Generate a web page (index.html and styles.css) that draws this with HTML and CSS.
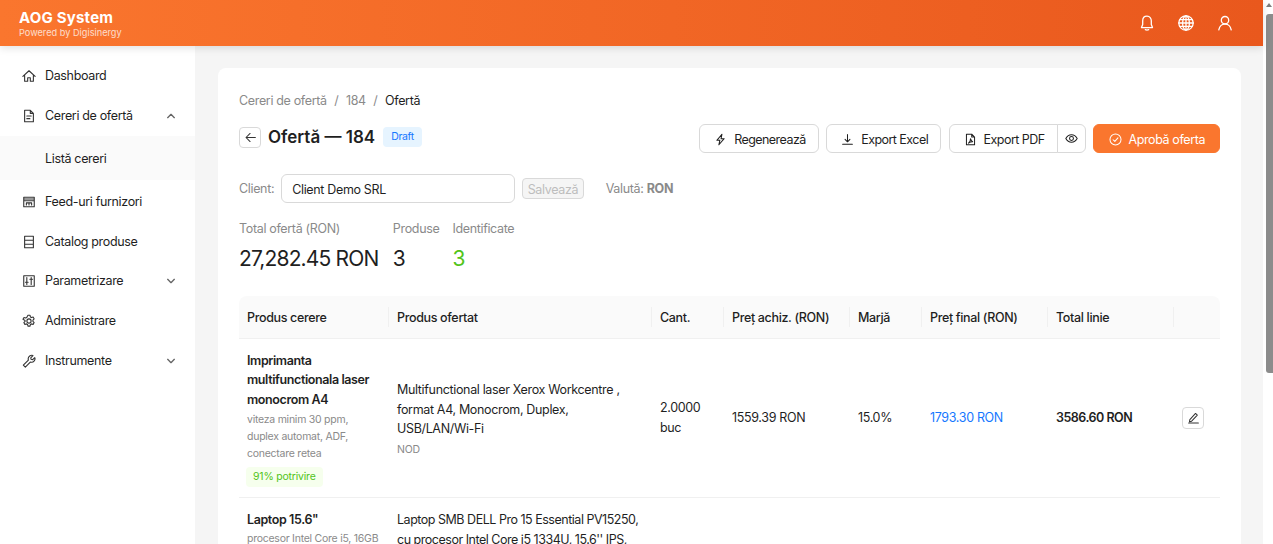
FILE: index.html
```html
<!DOCTYPE html>
<html lang="ro">
<head>
    <meta charset="UTF-8">
    <title>AOG System</title>
    <link rel="stylesheet" href="styles.css">
</head>
<body>
    <div class="window">
        <div class="app">
            <header class="topbar">
                <div class="brand">
                    <div class="brand-name">AOG System</div>
                    <div class="brand-sub">Powered by Digisinergy</div>
                </div>
                <div class="top-icons">
                    <svg viewBox="0 0 16 16"><path d="M8 1.200c-2.800 0-4.300 2.100-4.300 4.600v3.600L2.500 12.600h11l-1.200-3.200V5.800C12.300 3.300 10.800 1.200 8 1.200z"/><path d="M6.300 14.700c1 .5 2.400.5 3.400 0"/></svg>
                    <svg viewBox="0 0 16 16"><circle cx="8" cy="8" r="7.200"/><ellipse cx="8" cy="8" rx="3.400" ry="7.200"/><path d="M8 .8v14.400M.8 8h14.400M1.900 4.700h12.200M1.900 11.300h12.200"/></svg>
                    <svg viewBox="0 0 16 16"><circle cx="8" cy="5.200" r="3.700"/><path d="M1.800 14.800c.5-3.300 3-5.800 6.200-5.800s5.700 2.500 6.200 5.800"/></svg>
                </div>
            </header>
            <div class="body-row">
                <nav class="sidebar">
                    <div class="nav-item">
                        <svg class="nav-icon" viewBox="0 0 16 16"><path d="M1 8.500 8 2l7 6.500M3 7v7h3.500v-4h3v4H13V7"/></svg>
                        <span>Dashboard</span>
                    </div>
                    <div class="nav-item">
                        <svg class="nav-icon" viewBox="0 0 16 16"><path d="M3 1.500h6.500L13 5v9.500H3zM9.500 1.500V5H13M5.500 8h5M5.500 11h3.500"/></svg>
                        <span>Cereri de ofertă</span>
                        <svg class="nav-caret" viewBox="0 0 12 12"><path d="M2 8l4-4 4 4"/></svg>
                    </div>
                    <div class="nav-sub">Listă cereri</div>
                    <div class="nav-item">
                        <svg class="nav-icon" viewBox="0 0 16 16"><path d="M2 2.500h12v11H2zM2 4.500h12M2 6.500h12M5 9h6M5 11.500v-2.500M8 11.500v-2.500M11 11.500v-2.500"/></svg>
                        <span>Feed-uri furnizori</span>
                    </div>
                    <div class="nav-item">
                        <svg class="nav-icon" viewBox="0 0 16 16"><path d="M3 1.500h10v13H3zM3 6h10M3 10.500h10"/></svg>
                        <span>Catalog produse</span>
                    </div>
                    <div class="nav-item">
                        <svg class="nav-icon" viewBox="0 0 16 16"><path d="M2 2h12v12H2zM5.500 4v8M10.500 4v8M4 9.500h3M9 6h3"/></svg>
                        <span>Parametrizare</span>
                        <svg class="nav-caret" viewBox="0 0 12 12"><path d="M2 4l4 4 4-4"/></svg>
                    </div>
                    <div class="nav-item">
                        <svg class="nav-icon" viewBox="0 0 16 16"><circle cx="8" cy="8" r="2.400"/><path d="M6.800 1.500h2.400l.4 1.900 1.300.7 1.800-.6 1.200 2.100-1.400 1.300v1.600l1.400 1.300-1.200 2.100-1.800-.6-1.300.7-.4 1.900H6.800l-.4-1.900-1.300-.7-1.800.6-1.200-2.100 1.400-1.300V7.400L1.100 6.100l1.200-2.100 1.800.6 1.300-.7z"/></svg>
                        <span>Administrare</span>
                    </div>
                    <div class="nav-item">
                        <svg class="nav-icon" viewBox="0 0 16 16"><path d="M1.500 12.700 7.300 6.900c-.6-1.900 0-3.500 1.500-4.600 1.200-.8 2.600-1 3.700-.5L10 4.300l.4 1.800 1.800.4 2.400-2.400c.5 1.200.3 2.600-.6 3.700-1.100 1.400-2.700 2-4.500 1.400l-5.700 5.800z"/></svg>
                        <span>Instrumente</span>
                        <svg class="nav-caret" viewBox="0 0 12 12"><path d="M2 4l4 4 4-4"/></svg>
                    </div>
                </nav>
                <main class="content">
                    <section class="card">
                        <div class="crumbs">
                            <span>Cereri de ofertă</span><span class="sep">/</span><span>184</span><span class="sep">/</span><span class="crumb-now">Ofertă</span>
                        </div>
                        <div class="head-row">
                            <div class="title-wrap">
                                <button class="back-btn"><svg viewBox="0 0 16 16"><path d="M14 8H2.500M7.500 3 2.500 8l5 5"/></svg></button>
                                <h1>Ofertă — 184</h1>
                                <span class="tag-draft">Draft</span>
                            </div>
                            <div class="actions">
                                <button class="btn"><svg viewBox="0 0 16 16"><path d="M9.800 1.500 3.500 9h3.700l-1.200 5.500L12.500 7H8.700l1.100-5.500z"/></svg>Regenerează</button>
                                <button class="btn"><svg viewBox="0 0 16 16"><path d="M8 2v8.500M5 7.800 8 10.800l3-3M2 13.800h12"/></svg>Export Excel</button>
                                <div class="btn-group">
                                    <button class="btn"><svg viewBox="0 0 16 16"><path d="M3 1.500h6.500L13 5v9.500H3zM9.500 1.500V5H13M5.500 12.500c1.500-1 2.600-3.200 2.500-5.500.5 2 1.300 3.200 2.700 3.700-1.800 0-3.500.5-5.200 1.800z"/></svg>Export PDF</button>
                                    <button class="btn btn-eye"><svg viewBox="0 0 16 16"><path d="M1 8c1.700-3 4-4.500 7-4.500s5.300 1.500 7 4.500c-1.700 3-4 4.500-7 4.500S2.700 11 1 8z"/><circle cx="8" cy="8" r="2.400"/></svg></button>
                                </div>
                                <button class="btn btn-primary"><svg viewBox="0 0 16 16"><circle cx="8" cy="8" r="6.800"/><path d="M5 8.300l2.200 2.100L11 6"/></svg>Aprobă oferta</button>
                            </div>
                        </div>
                        <div class="client-row">
                            <label>Client:</label>
                            <input class="client-input" type="text" value="Client Demo SRL">
                            <button class="btn-save" disabled>Salvează</button>
                            <span class="currency">Valută: <b>RON</b></span>
                        </div>
                        <div class="stats">
                            <div class="stat stat-total">
                                <div class="stat-label">Total ofertă (RON)</div>
                                <div class="stat-value">27,282.45 RON</div>
                            </div>
                            <div class="stat">
                                <div class="stat-label">Produse</div>
                                <div class="stat-value">3</div>
                            </div>
                            <div class="stat">
                                <div class="stat-label">Identificate</div>
                                <div class="stat-value stat-green">3</div>
                            </div>
                        </div>
                        <table class="offer-table">
                            <colgroup>
                                <col class="c-req"><col class="c-off"><col class="c-qty"><col class="c-buy"><col class="c-mar"><col class="c-fin"><col class="c-tot"><col class="c-act">
                            </colgroup>
                            <thead>
                                <tr>
                                    <th>Produs cerere</th>
                                    <th>Produs ofertat</th>
                                    <th>Cant.</th>
                                    <th>Preț achiz. (RON)</th>
                                    <th>Marjă</th>
                                    <th>Preț final (RON)</th>
                                    <th>Total linie</th>
                                    <th></th>
                                </tr>
                            </thead>
                            <tbody>
                                <tr>
                                    <td class="text-cell">
                                        <div class="prod-name">Imprimanta multifunctionala laser monocrom A4</div>
                                        <div class="prod-spec">viteza minim 30 ppm, duplex automat, ADF, conectare retea</div>
                                        <div class="tag-match">91% potrivire</div>
                                    </td>
                                    <td class="text-cell">
                                        <div>Multifunctional laser Xerox Workcentre , format A4, Monocrom, Duplex, USB/LAN/Wi-Fi</div>
                                        <div class="prod-spec">NOD</div>
                                    </td>
                                    <td>2.0000 buc</td>
                                    <td>1559.39 RON</td>
                                    <td>15.0%</td>
                                    <td class="price-final">1793.30 RON</td>
                                    <td class="line-total">3586.60 RON</td>
                                    <td><button class="edit-btn"><svg viewBox="0 0 16 16"><path d="M3.500 10.500 10.500 3l2.200 2-7 7.500-2.700.7zM2 14.700h12"/></svg></button></td>
                                </tr>
                                <tr>
                                    <td class="top-cell">
                                        <div class="prod-name">Laptop 15.6"</div>
                                        <div class="prod-spec prod-spec-tight">procesor Intel Core i5, 16GB RAM, SSD 512GB</div>
                                    </td>
                                    <td class="top-cell offer-long">Laptop SMB DELL Pro 15 Essential PV15250, cu procesor Intel Core i5 1334U, 15.6'' IPS, 16GB, 512GB SSD</td>
                                    <td></td><td></td><td></td><td></td><td></td><td></td>
                                </tr>
                            </tbody>
                        </table>
                    </section>
                </main>
            </div>
        </div>
        <div class="scrollbar">
            <div class="scroll-arrow"></div>
            <div class="scroll-thumb"></div>
        </div>
    </div>
</body>
</html>
```

FILE: styles.css
```css
/* Global Styles */
html, body {
    margin: 0;
    padding: 0;
    height: 544px;
    overflow: hidden;
}
body {
    font-family: Inter, "Noto Sans", sans-serif;
    font-size: 12.5px;
    line-height: 19.5px;
    letter-spacing: -0.34px;
    color: #1f1f1f;
    background: #fff;
}
button, input {
    font-family: inherit;
    letter-spacing: inherit;
}
svg {
    fill: none;
    stroke: currentColor;
    stroke-width: 1.25;
    stroke-linecap: round;
    stroke-linejoin: round;
}
.window {
    display: flex;
    height: 544px;
}
.app {
    flex: 1;
    min-width: 0;
    display: flex;
    flex-direction: column;
}

/* Scrollbar */
.scrollbar {
    width: 10px;
    background: #fff;
    box-sizing: border-box;
    padding-left: 3px;
}
.scroll-arrow {
    width: 0;
    height: 0;
    margin: 3px 0 7px 0;
    border-left: 3.5px solid transparent;
    border-right: 3.5px solid transparent;
    border-bottom: 4px solid #7d7d7d;
}
.scroll-thumb {
    height: 359px;
    background: #8c8c8c;
    border-radius: 3px 0 0 3px;
}

/* Top bar */
.topbar {
    height: 46px;
    flex-shrink: 0;
    background: linear-gradient(90deg, #fa762e, #e9581d);
    box-shadow: 0 2px 8px rgba(0, 0, 0, 0.12);
    display: flex;
    justify-content: space-between;
    align-items: center;
    padding: 0 30px 0 19px;
    color: #fff;
    position: relative;
    z-index: 2;
}
.brand-name {
    font-size: 15px;
    font-weight: 700;
    line-height: 18px;
    letter-spacing: 0.2px;
}
.brand-sub {
    font-size: 9.2px;
    line-height: 11px;
    letter-spacing: 0;
    opacity: 0.75;
}
.top-icons {
    display: flex;
    gap: 23px;
}
.top-icons svg {
    width: 16px;
    height: 16px;
    stroke-width: 1.3;
}

/* Sidebar */
.body-row {
    flex: 1;
    display: flex;
    min-height: 0;
}
.sidebar {
    width: 195px;
    flex-shrink: 0;
    background: #fff;
    padding-top: 10px;
    box-sizing: border-box;
}
.nav-item {
    height: 39.7px;
    display: flex;
    align-items: center;
    padding: 0 19px 0 22px;
}
.nav-item span {
    flex: 1;
}
.nav-icon {
    width: 14px;
    height: 14px;
    margin-right: 9px;
    color: #333;
}
.nav-caret {
    width: 10px;
    height: 10px;
    color: #666;
    stroke-width: 1.6;
}
.nav-sub {
    height: 44px;
    box-sizing: border-box;
    padding-top: 1px;
    line-height: 44px;
    margin: 0.6px 0 2px;
    padding-left: 45px;
    background: #fafafa;
}

/* Content */
.content {
    flex: 1;
    min-width: 0;
    background: #f5f5f5;
    padding: 22px 22px 0 23px;
    overflow: hidden;
}
.card {
    background: #fff;
    border-radius: 8px;
    padding: 23px 21px 0;
    height: 640px;
    box-sizing: border-box;
}
.crumbs {
    line-height: 20px;
    color: #8a8a8a;
    display: flex;
    gap: 7.5px;
}
.crumb-now {
    color: #1f1f1f;
}
.head-row {
    display: flex;
    justify-content: space-between;
    align-items: flex-start;
    margin-top: 13px;
}
.title-wrap {
    display: flex;
    align-items: center;
    gap: 7px;
    height: 26px;
}
.back-btn {
    width: 22px;
    height: 21px;
    padding: 0;
    border: 1px solid #d9d9d9;
    border-radius: 4px;
    background: #fff;
    display: flex;
    align-items: center;
    justify-content: center;
    color: #333;
}
.back-btn svg {
    width: 13px;
    height: 13px;
}
h1 {
    font-size: 17px;
    line-height: 24px;
    font-weight: 600;
    letter-spacing: 0;
    margin: 0;
}
.tag-draft {
    background: #e6f4ff;
    color: #1677ff;
    font-size: 10.5px;
    line-height: 20px;
    padding: 0 8px;
    border-radius: 4px;
    margin-left: 1px;
}
.actions {
    display: flex;
    gap: 7.5px;
}
.btn {
    height: 29px;
    box-sizing: border-box;
    border: 1px solid #d9d9d9;
    border-radius: 6px;
    background: #fff;
    color: #1f1f1f;
    font-size: 12.5px;
    letter-spacing: -0.55px;
    padding: 1px 12px 0 14px;
    display: flex;
    align-items: center;
    gap: 7px;
}
.btn svg {
    width: 13px;
    height: 13px;
}
.btn-group {
    display: flex;
}
.btn-group .btn:first-child {
    border-radius: 6px 0 0 6px;
}
.btn-eye {
    border-radius: 0 6px 6px 0;
    margin-left: -1px;
    width: 29px;
    padding: 0;
    justify-content: center;
}
.btn-primary {
    background: #fa762e;
    border-color: #fa762e;
    color: #fff;
    letter-spacing: -0.4px;
    padding: 1px 14px 0 14.5px;
}
.client-row {
    display: flex;
    align-items: center;
    margin-top: 21px;
    color: #8a8a8a;
}
.client-row label, .currency {
    padding-top: 1px;
}
.client-input {
    width: 234px;
    height: 29px;
    box-sizing: border-box;
    margin-left: 7px;
    border: 1px solid #d9d9d9;
    border-radius: 6px;
    padding: 2px 10px 0;
    font-size: 12.5px;
    color: #1f1f1f;
}
.btn-save {
    height: 21px;
    margin-left: 7px;
    padding: 1px 4.5px 0;
    border: 1px solid #d9d9d9;
    border-radius: 4px;
    background: #f5f5f5;
    color: #bdbdbd;
    font-size: 12.5px;
}
.currency {
    margin-left: 22px;
}
.stats {
    display: flex;
    gap: 13px;
    margin-top: 16px;
}
.stat-total {
    margin-right: 1.5px;
}
.stat-label {
    line-height: 20px;
    color: #8a8a8a;
}
.stat-value {
    font-size: 21px;
    line-height: 32px;
    letter-spacing: -0.85px;
    margin-top: 4px;
}
.stat-green {
    color: #52c41a;
}

/* Table */
.offer-table {
    width: 981px;
    table-layout: fixed;
    border-collapse: collapse;
    margin-top: 21px;
}
.c-req { width: 150px; }
.c-off { width: 263px; }
.c-qty { width: 72px; }
.c-buy { width: 126px; }
.c-mar { width: 72px; }
.c-fin { width: 126px; }
.c-tot { width: 126px; }
.c-act { width: 46px; }
.offer-table th {
    background: #fafafa;
    height: 42px;
    box-sizing: border-box;
    padding: 2px 8px 0;
    text-align: left;
    font-weight: 500;
    border-bottom: 1px solid #f0f0f0;
    position: relative;
}
.offer-table th:first-child {
    border-radius: 8px 0 0 0;
}
.offer-table th:last-child {
    border-radius: 0 8px 0 0;
}
.offer-table th:not(:last-child)::after {
    content: "";
    position: absolute;
    right: 0;
    top: 11px;
    height: 20px;
    width: 1px;
    background: #f0f0f0;
}
.offer-table td {
    padding: 11px 8px;
    border-bottom: 1px solid #f0f0f0;
    vertical-align: middle;
}
.offer-table td.text-cell {
    padding: 12px 8px 10px;
}
.offer-table td.top-cell {
    padding-top: 12px;
    vertical-align: top;
}
.offer-long {
    letter-spacing: -0.48px;
}
.prod-name {
    font-weight: 600;
    letter-spacing: -0.4px;
}
.prod-spec {
    font-size: 10.5px;
    line-height: 17px;
    letter-spacing: -0.25px;
    margin-top: 2px;
    color: #8a8a8a;
}
.prod-spec-tight {
    margin-top: 0;
}
.tag-match {
    width: fit-content;
    margin-top: 5px;
    margin-left: -1px;
    padding: 0 7px;
    line-height: 20px;
    font-size: 10.5px;
    letter-spacing: -0.2px;
    color: #52c41a;
    background: #f6ffed;
    border-radius: 4px;
}
.price-final {
    color: #1677ff;
}
.line-total {
    font-weight: 600;
    letter-spacing: -0.5px;
}
.edit-btn {
    width: 22px;
    height: 22px;
    padding: 0;
    border: 1px solid #d9d9d9;
    border-radius: 4px;
    background: #fff;
    display: flex;
    align-items: center;
    justify-content: center;
    color: #333;
}
.edit-btn svg {
    width: 13px;
    height: 13px;
}
```
